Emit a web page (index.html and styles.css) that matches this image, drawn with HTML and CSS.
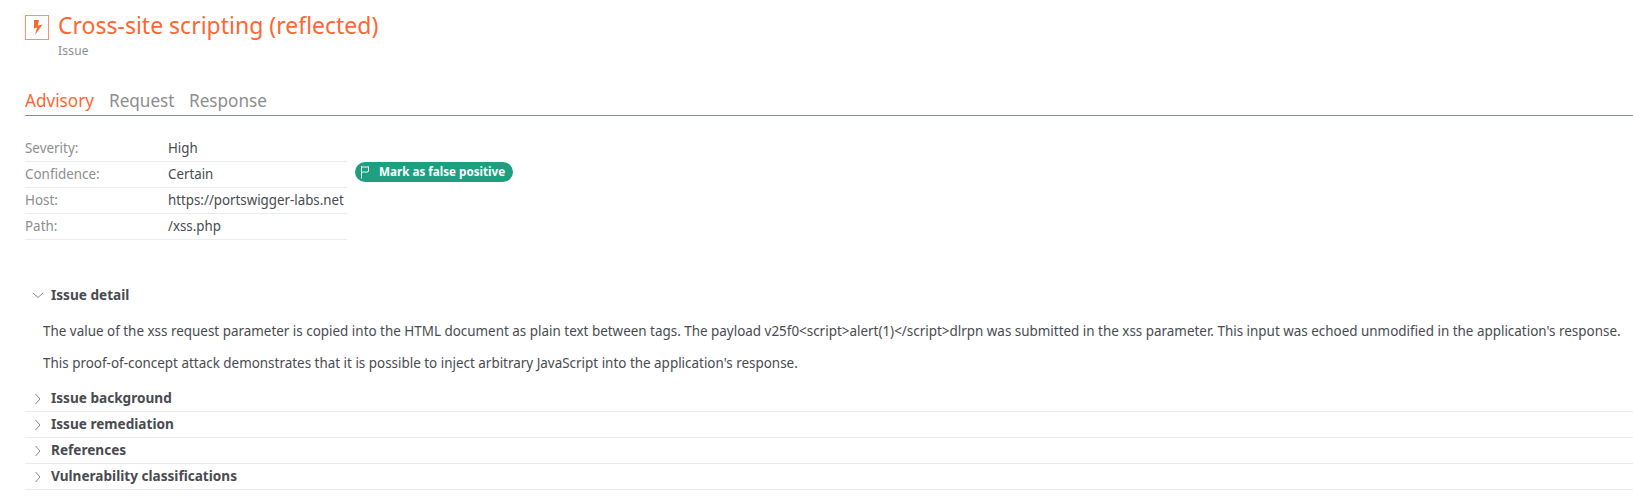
FILE: index.html
```html
<!DOCTYPE html>
<html lang="en">
<head>
<meta charset="utf-8">
<title>Cross-site scripting (reflected)</title>
<link rel="stylesheet" href="styles.css">
</head>
<body>
<main class="issue">
  <header class="head">
    <svg class="head-icon" width="24" height="25" viewBox="0 0 24 25"><rect x=".5" y=".5" width="23" height="24" fill="none" stroke="#ff8d6e"/><path d="M9 5h5l-1.200 5.500 4.700-1L10 20l2-7.500-3 1z" fill="#ff6633"/></svg>
    <div>
      <h1 class="title"><span class="narrow">Cross-site scripting (reflected)</span></h1>
      <p class="kind">Issue</p>
    </div>
  </header>
  <nav class="tabs">
    <a class="tab tab-active"><span class="narrow">Advisory</span></a>
    <a class="tab tab-request"><span class="narrow">Request</span></a>
    <a class="tab tab-response"><span class="narrow">Response</span></a>
  </nav>
  <section class="summary">
    <dl class="facts">
      <div class="fact"><dt><span class="narrow">Severity:</span></dt><dd><span class="narrow">High</span></dd></div>
      <div class="fact"><dt><span class="narrow">Confidence:</span></dt><dd><span class="narrow">Certain</span></dd></div>
      <div class="fact"><dt><span class="narrow">Host:</span></dt><dd><span class="narrow">https://portswigger-labs.net</span></dd></div>
      <div class="fact"><dt><span class="narrow">Path:</span></dt><dd><span class="narrow">/xss.php</span></dd></div>
    </dl>
    <button class="mark"><svg width="10" height="14" viewBox="0 0 10 14" fill="none" stroke="#fff"><path d="M1.500 1v12.500M1.500 2.500C4 1 5.500 3.200 8.500 1.500v5C5.500 8.200 4 6 1.500 7.500"/></svg><span class="narrow-bold">Mark as false positive</span></button>
  </section>
  <section class="sections">
    <h2 class="row row-open"><svg class="chev" width="12" height="12" viewBox="0 0 12 12"><path d="M1 4l5 4.500L11 4"/></svg><span class="narrow-bold">Issue detail</span></h2>
    <div class="detail">
      <p><span class="narrow">The value of the xss request parameter is copied into the HTML document as plain text between tags. The payload v25f0&lt;script&gt;alert(1)&lt;/script&gt;dlrpn was submitted in the xss parameter. This input was echoed unmodified in the application's response.</span></p>
      <p><span class="narrow">This proof-of-concept attack demonstrates that it is possible to inject arbitrary JavaScript into the application's response.</span></p>
    </div>
    <h2 class="row"><svg class="chev" width="12" height="12" viewBox="0 0 12 12"><path d="M3.500 1l4.500 5-4.500 5"/></svg><span class="narrow-bold">Issue background</span></h2>
    <h2 class="row"><svg class="chev" width="12" height="12" viewBox="0 0 12 12"><path d="M3.500 1l4.500 5-4.500 5"/></svg><span class="narrow-bold">Issue remediation</span></h2>
    <h2 class="row"><svg class="chev" width="12" height="12" viewBox="0 0 12 12"><path d="M3.500 1l4.500 5-4.500 5"/></svg><span class="narrow-bold">References</span></h2>
    <h2 class="row"><svg class="chev" width="12" height="12" viewBox="0 0 12 12"><path d="M3.500 1l4.500 5-4.500 5"/></svg><span class="narrow-bold">Vulnerability classifications</span></h2>
  </section>
</main>
</body>
</html>
```
FILE: styles.css
```css
* { box-sizing: border-box; margin: 0; padding: 0; }
body { background: #fff; color: #494b50; font: 14px/26px "Noto Sans", "Open Sans", sans-serif; overflow: hidden; }
.issue { padding-left: 25px; }
.narrow, .narrow-bold { display: inline-block; transform-origin: 0 50%; white-space: nowrap; }
.narrow { transform: scaleX(.958); }
.narrow-bold { transform: scaleX(.971); }
.head { display: flex; gap: 9px; height: 85px; padding-top: 9px; }
.head-icon { margin-top: 6px; }
.title { color: #ff6633; font-size: 24px; font-weight: 400; line-height: 32px; }
.kind { color: #8c8e90; font-size: 12px; line-height: 20px; letter-spacing: .2px; }
.tabs { display: flex; height: 31px; border-bottom: 1px solid #ff6633; }
.tab { color: #8c8e90; font-size: 18px; line-height: 30px; }
.tab-active { width: 84px; color: #ff6633; }
.tab-request { width: 80px; }
.tab .narrow { transform: scaleX(.952); }
.summary { display: flex; gap: 8px; padding-top: 20px; height: 146px; }
.facts { width: 322px; }
.fact { display: flex; height: 26px; line-height: 24px; border-bottom: 1px solid #eaecef; }
.fact dt { flex: 0 0 143px; color: #8c8e90; }
.fact dd { min-width: 0; }
.fact dd .narrow { transform: scaleX(.95); }
.mark { display: flex; align-items: center; width: 158px; height: 20px; margin-top: 26px; border: 0; border-radius: 10px; padding-left: 5px; gap: 9px; background: #1d9f80; color: #fff; font: bold 12px/20px "Noto Sans", "Open Sans", sans-serif; white-space: nowrap; }
.sections { padding-top: 20px; }
.row { display: flex; height: 26px; padding-left: 7px; gap: 7px; font-size: 14px; font-weight: 700; line-height: 24px; border-bottom: 1px solid #eaecec; }
.row-open { line-height: 26px; border-bottom: 0; }
.chev { margin-top: 7px; fill: none; stroke: #777a7e; stroke-width: .9; }
.detail { padding: 10px 0 0 18px; height: 78px; }
.detail p { height: 32px; }
.detail .narrow { transform: scaleX(.9592); }
```
